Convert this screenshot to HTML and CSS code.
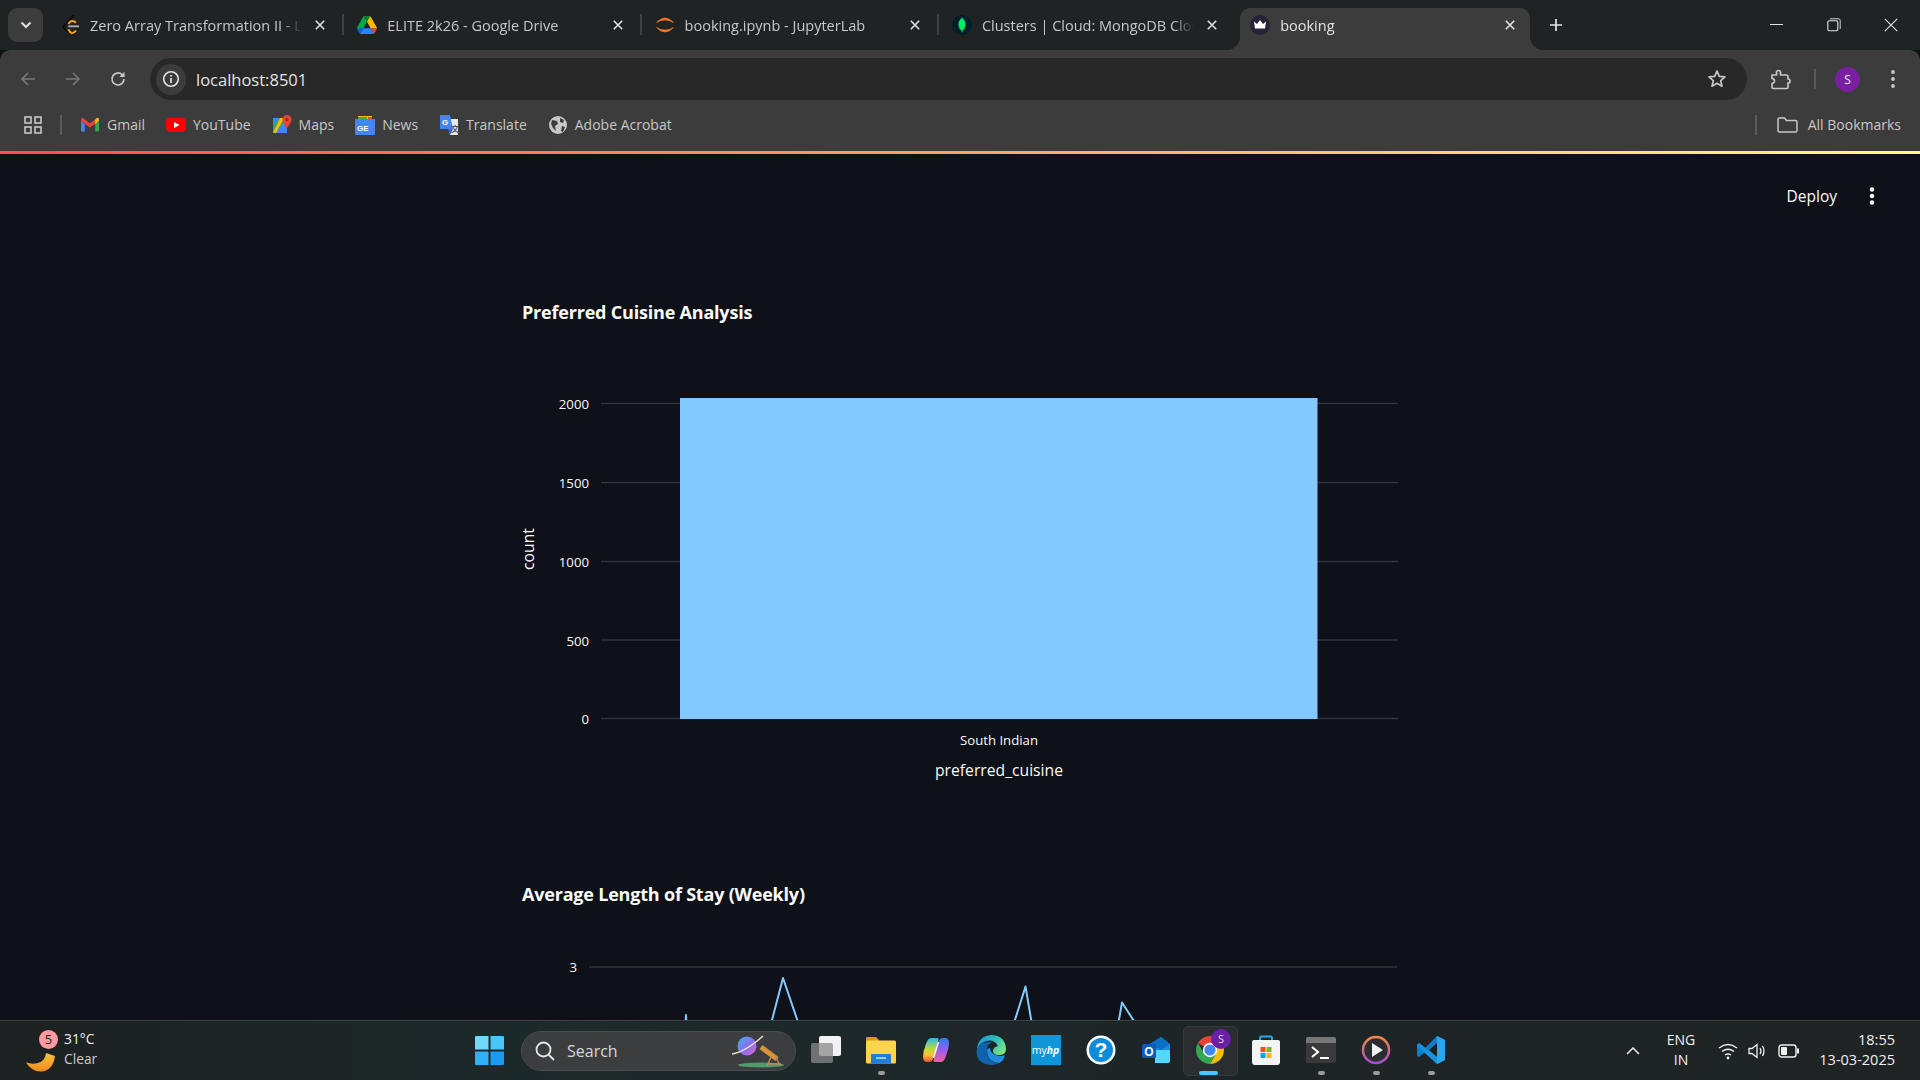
FILE: index.html
```html
<!DOCTYPE html>
<html>
<head>
<meta charset="utf-8">
<title>booking</title>
<link rel="stylesheet" href="styles.css">
</head>
<body>

<div class="tabstrip">
  <div class="tab-search">
    <svg width="12" height="8" viewBox="0 0 12 8"><path d="M1.500 1.500 6 6l4.500-4.500" fill="none" stroke="#e3e3e3" stroke-width="2"/></svg>
  </div>

  <div class="tab">
    <svg class="fav" viewBox="0 0 20 20"><path d="M14 0 3.800 11q-.8 1 0 2L8.300 18" fill="none" stroke="#0a0a0a" stroke-width="1.800"/><path d="M8.300 9Q11.500 3.500 16 7.700M8.300 14.300Q11.500 21 16 15.700" fill="none" stroke="#f7a21b" stroke-width="2"/><path d="M8.300 11.300H19" stroke="#b3b3b3" stroke-width="1.800"/></svg>
    <span class="tab-title">Zero Array Transformation II - Le</span>
    <svg class="tab-x" viewBox="0 0 10 10"><path d="M.8.8l8.400 8.400M9.200.8.800 9.200" stroke="#e3e3e3" stroke-width="1.600"/></svg>
  </div>
  <div class="tab">
    <svg class="fav" viewBox="0 0 87.300 78"><path d="m6.600 66.850 3.850 6.650c.8 1.400 1.950 2.500 3.300 3.300l13.750-23.800h-27.500c0 1.550.4 3.100 1.200 4.500z" fill="#0066da"/><path d="m43.650 25-13.750-23.800c-1.350.8-2.500 1.900-3.300 3.300l-25.400 44a9.060 9.060 0 0 0 -1.200 4.500h27.500z" fill="#00ac47"/><path d="m73.550 76.800c1.350-.8 2.500-1.900 3.300-3.300l1.600-2.750 7.650-13.250c.8-1.400 1.200-2.950 1.200-4.500h-27.502l5.852 11.500z" fill="#ea4335"/><path d="m43.650 25 13.750-23.800c-1.350-.8-2.900-1.200-4.500-1.200h-18.500c-1.600 0-3.150.45-4.500 1.200z" fill="#00832d"/><path d="m59.800 53h-32.300l-13.750 23.800c1.350.8 2.900 1.200 4.500 1.200h50.800c1.600 0 3.150-.45 4.500-1.200z" fill="#2684fc"/><path d="m73.400 26.500-12.700-22c-.8-1.400-1.950-2.500-3.300-3.300l-13.750 23.800 16.150 28h27.450c0-1.550-.4-3.100-1.200-4.500z" fill="#ffba00"/></svg>
    <span class="tab-title">ELITE 2k26 - Google Drive</span>
    <svg class="tab-x" viewBox="0 0 10 10"><path d="M.8.8l8.400 8.400M9.200.8.800 9.200" stroke="#e3e3e3" stroke-width="1.600"/></svg>
  </div>
  <div class="tab">
    <svg class="fav" viewBox="0 0 20 20"><path d="M1.500 7.500Q10-1.500 18.500 7.500Q10 2.500 1.500 7.500zM1.500 12.500Q10 21.500 18.500 12.500Q10 17.500 1.500 12.500z" fill="#f37726" stroke="#f37726" stroke-width=".6"/></svg>
    <span class="tab-title">booking.ipynb - JupyterLab</span>
    <svg class="tab-x" viewBox="0 0 10 10"><path d="M.8.8l8.400 8.400M9.200.8.800 9.200" stroke="#e3e3e3" stroke-width="1.600"/></svg>
  </div>
  <div class="tab tab-last">
    <svg class="fav" viewBox="0 0 20 20"><circle cx="10" cy="10" r="10" fill="#001e2b"/><path d="M10 2.500q4 4 3.500 8-.5 3.500-3 5l-.2 2h-.6l-.2-2q-2.500-1.500-3-5-.5-4 3.500-8z" fill="#00ed64"/></svg>
    <span class="tab-title">Clusters | Cloud: MongoDB Clou</span>
    <svg class="tab-x" viewBox="0 0 10 10"><path d="M.8.8l8.400 8.400M9.200.8.800 9.200" stroke="#e3e3e3" stroke-width="1.600"/></svg>
  </div>
  <div class="tab tab-active">
    <svg class="fav" viewBox="0 0 20 20"><circle cx="10" cy="10" r="10" fill="#23233a"/><path d="M4 6.500l3 2.500 3-4 3 4 3-2.500-1 7h-10z" fill="#fff"/></svg>
    <span class="tab-title">booking</span>
    <svg class="tab-x" viewBox="0 0 10 10"><path d="M.8.8l8.400 8.400M9.200.8.800 9.200" stroke="#e3e3e3" stroke-width="1.600"/></svg>
  </div>

  <svg class="new-tab" width="14" height="14" viewBox="0 0 14 14"><path d="M7 1v12M1 7h12" stroke="#e3e3e3" stroke-width="1.700"/></svg>

  <div class="win-controls">
    <svg width="14" height="14" viewBox="0 0 14 14"><path d="M0 6.500h13" stroke="#e3e3e3" stroke-width="1"/></svg>
    <svg width="14" height="14" viewBox="0 0 14 14"><rect x=".8" y="2.800" width="10" height="10" rx="1.500" fill="none" stroke="#e3e3e3" stroke-width="1.100"/><path d="M3 .8h8.500q1.700 0 1.700 1.700V11" fill="none" stroke="#e3e3e3" stroke-width=".9"/></svg>
    <svg width="14" height="14" viewBox="0 0 14 14"><path d="M.8.8l12.400 12.400M13.200.8.800 13.200" stroke="#e3e3e3" stroke-width="1.100"/></svg>
  </div>
</div>

<div class="toolbar">
  <div class="nav-btn"><svg width="16" height="16" viewBox="0 0 16 16"><path d="M15 8H2M8 2 2 8l6 6" fill="none" stroke="#747775" stroke-width="1.700"/></svg></div>
  <div class="nav-btn"><svg width="16" height="16" viewBox="0 0 16 16"><path d="M1 8h13M8 2l6 6-6 6" fill="none" stroke="#747775" stroke-width="1.700"/></svg></div>
  <div class="nav-btn"><svg width="18" height="18" viewBox="0 0 18 18"><path d="M15 9a6 6 0 1 1-1.800-4.300L15 6.500" fill="none" stroke="#c7c7c7" stroke-width="1.700"/><path d="M15.500 1.800v5.200h-5.200z" fill="#c7c7c7"/></svg></div>
  <div class="omnibox">
    <div class="site-info"><svg width="18" height="18" viewBox="0 0 18 18"><circle cx="9" cy="9" r="7.300" fill="none" stroke="#e3e3e3" stroke-width="1.600"/><path d="M9 8v5M9 5v1.600" stroke="#e3e3e3" stroke-width="1.700"/></svg></div>
    <span class="url">localhost:8501</span>
    <svg class="star" width="20" height="20" viewBox="0 0 20 20"><path d="M10 2l2.300 5.300 5.700.5-4.300 3.800 1.300 5.600L10 14.200 5 17.200l1.300-5.600L2 7.800l5.700-.5z" fill="none" stroke="#c7c7c7" stroke-width="1.700" stroke-linejoin="round"/></svg>
  </div>
  <svg class="puzzle" width="22" height="22" viewBox="0 0 22 22"><path d="M2 7h4.500V4.500a2 2 0 0 1 4 0V7H16q2 0 2 2v2a2 2 0 0 1 0 4v4q0 1.500-1.500 1.500H3.500Q2 20.500 2 19v-3.500a2.500 2.500 0 0 0 0-5z" fill="none" stroke="#c7c7c7" stroke-width="1.700" stroke-linejoin="round"/></svg>
  <span class="tool-sep"></span>
  <span class="avatar">S</span>
  <svg class="tool-menu" width="6" height="20" viewBox="0 0 6 20"><circle cx="3" cy="3" r="1.900" fill="#c7c7c7"/><circle cx="3" cy="10" r="1.900" fill="#c7c7c7"/><circle cx="3" cy="17" r="1.900" fill="#c7c7c7"/></svg>
</div>

<div class="bookmarks">
  <svg class="apps" width="18" height="18" viewBox="0 0 18 18"><g fill="none" stroke="#c7c7c7" stroke-width="1.600"><rect x="1" y="1" width="6" height="6"/><rect x="11" y="1" width="6" height="6"/><rect x="1" y="11" width="6" height="6"/><rect x="11" y="11" width="6" height="6"/></g></svg>
  <span class="bm-sep"></span>
  <div class="bm">
    <svg class="bm-icon" viewBox="0 0 20 20"><path d="M1 5.500v10q0 1 1 1h2.800V9.200z" fill="#4285f4"/><path d="M19 5.500v10q0 1-1 1h-2.800V9.200z" fill="#34a853"/><path d="M1 4.500Q1 2.500 3 3l7 5.500L17 3q2-.5 2 1.500v1l-4 3.500L10 12.500 5 9 1 5.500z" fill="#ea4335"/><path d="M15.200 4.500 17 3q2-.5 2 1.500v1L15.200 9.200z" fill="#fbbc04"/></svg>
    Gmail
  </div>
  <div class="bm">
    <svg class="bm-icon" viewBox="0 0 20 20"><rect y="3" width="20" height="14" rx="4" fill="#f00"/><path d="M8 7l5.500 3L8 13z" fill="#fff"/></svg>
    YouTube
  </div>
  <div class="bm">
    <svg class="bm-icon" viewBox="0 0 20 20"><path d="M1 3h11v15H1z" fill="#34a853"/><path d="M1 18 12 8l3 3v7z" fill="#4285f4"/><path d="M1 18 8 3h4L4 18z" fill="#fbbc04"/><path d="M1 3h7L1 10z" fill="#4285f4"/><path d="M15 0a4.500 4.500 0 0 1 4.500 4.500Q19.500 8 15 13q-4.500-5-4.500-8.500A4.500 4.500 0 0 1 15 0z" fill="#ea4335"/><circle cx="15" cy="4.500" r="1.600" fill="#8e2a20"/></svg>
    Maps
  </div>
  <div class="bm">
    <svg class="bm-icon" viewBox="0 0 20 20"><path d="M3 1h14v5H3z" fill="#fbbc04"/><path d="M3 2h9v4H3z" fill="#34a853"/><path d="M13 2h4v4h-4z" fill="#ea4335"/><rect x="0" y="4" width="20" height="16" rx="1" fill="#4285f4"/><text x="2" y="16" class="bm-glyph">GE</text></svg>
    News
  </div>
  <div class="bm">
    <svg class="bm-icon" viewBox="0 0 20 20"><path d="M9 4h10v16H11z" fill="#e8eaed"/><path d="M1 0h10l3 14H1z" fill="#4285f4"/><path d="M9 14h5l-3 6z" fill="#3367d6"/><text x="3" y="10" class="bm-glyph">G</text><text x="12" y="17" class="bm-glyph bm-glyph-dark">文</text></svg>
    Translate
  </div>
  <div class="bm">
    <svg class="bm-icon" viewBox="0 0 20 20"><circle cx="10" cy="10" r="9" fill="#c7c7c7"/><path d="M4 5l5 1 1 3-3 2 1 5-3-3-2-4zM12 3l4 2-1 3-3-1zM14 11l3 1-2 5-2-1z" fill="#3c3c3c"/></svg>
    Adobe Acrobat
  </div>
  <span class="bm-spacer"></span>
  <span class="bm-sep"></span>
  <div class="bm bm-all">
    <svg class="bm-folder" width="21" height="16" viewBox="0 0 21 16"><path d="M1 2.500Q1 1 2.500 1h5l2 2.500h9Q20 3.500 20 5v8.500Q20 15 18.500 15h-16Q1 15 1 13.500z" fill="none" stroke="#c7c7c7" stroke-width="1.500"/></svg>
    All Bookmarks
  </div>
</div>

<div class="decoration"></div>

<main class="page">
  <header class="app-header">
    <span class="deploy">Deploy</span>
    <svg class="app-menu" width="6" height="18" viewBox="0 0 6 18"><circle cx="3" cy="2.500" r="2.200" fill="#fafafa"/><circle cx="3" cy="9" r="2.200" fill="#fafafa"/><circle cx="3" cy="15.500" r="2.200" fill="#fafafa"/></svg>
  </header>

  <div class="block">
    <h3 class="chart-title">Preferred Cuisine Analysis</h3>
    <svg class="chart" width="876" height="450" viewBox="0 0 876 450">
      <g class="grid">
        <line x1="79" x2="876" y1="63.500" y2="63.500"/>
        <line x1="79" x2="876" y1="142.500" y2="142.500"/>
        <line x1="79" x2="876" y1="221.500" y2="221.500"/>
        <line x1="79" x2="876" y1="300" y2="300"/>
        <line x1="79" x2="876" y1="378.500" y2="378.500"/>
      </g>
      <rect x="158" y="58" width="637.500" height="321" fill="#83c9ff"/>
      <g class="tick" text-anchor="end">
        <text x="67" y="69">2000</text>
        <text x="67" y="148">1500</text>
        <text x="67" y="227">1000</text>
        <text x="67" y="306">500</text>
        <text x="67" y="384">0</text>
      </g>
      <text class="tick" x="477" y="405" text-anchor="middle">South Indian</text>
      <text class="axis" x="477" y="436" text-anchor="middle">preferred_cuisine</text>
      <text class="axis" transform="translate(12 209) rotate(-90)" text-anchor="middle">count</text>
    </svg>

    <h3 class="chart-title chart-title-next">Average Length of Stay (Weekly)</h3>
    <svg class="chart chart-line" width="876" height="160" viewBox="0 0 876 160">
      <line class="gridline" x1="67" x2="875" y1="41" y2="41"/>
      <text class="tick" x="55" y="46" text-anchor="end">3</text>
      <path d="M161 140 164 89 167 140M238 140 261 52 291 140M478.500 140 503.500 60.500 517 140M589 140 600 76.500 641 140" fill="none" stroke="#83c9ff" stroke-width="2" stroke-linejoin="round"/>
    </svg>
  </div>
</main>

<footer class="taskbar">
  <div class="weather">
    <svg class="weather-moon" width="30" height="20" viewBox="0 0 30 20"><defs><linearGradient id="moonFill" x1="0" y1="0" x2="0" y2="1"><stop offset="0" stop-color="#f9c23c"/><stop offset="1" stop-color="#ee8a1d"/></linearGradient></defs><path d="M0 9.500Q6 19 15 18.500 27 18 29 3L20 0Q19 8 12 10 6 11.500 0 9.500z" fill="url(#moonFill)"/></svg>
    <span class="weather-badge">5</span>
    <div class="weather-text"><span class="weather-temp">31°C</span><span>Clear</span></div>
  </div>

  <div class="start">
    <svg width="29" height="29" viewBox="0 0 29 29"><path d="M0 1q0-1 1-1h12.500v13.500H0z" fill="#6fd8fb"/><path d="M15.500 0H28q1 0 1 1v12.500H15.500z" fill="#48c6f7"/><path d="M0 15.500h13.500V29H1q-1 0-1-1z" fill="#2fb1f5"/><path d="M15.500 15.500H29V28q0 1-1 1H15.500z" fill="#1a9bf0"/></svg>
  </div>

  <div class="search">
    <svg width="22" height="22" viewBox="0 0 22 22"><circle cx="9.500" cy="9.500" r="7" fill="none" stroke="#e6e6e6" stroke-width="1.800"/><path d="M14.500 14.500 20 20" stroke="#e6e6e6" stroke-width="1.800"/></svg>
    <span class="search-label">Search</span>
    <svg class="search-art" width="56" height="36" viewBox="0 0 56 36"><defs><linearGradient id="planetFill" x1="0" y1="0" x2="1" y2="1"><stop offset="0" stop-color="#3fb4e8"/><stop offset=".55" stop-color="#8a6cf0"/><stop offset="1" stop-color="#e06ac8"/></linearGradient></defs><ellipse cx="30" cy="32" rx="23" ry="2.500" fill="#4e9a6a"/><circle cx="16" cy="13" r="9.500" fill="url(#planetFill)"/><path d="M1 21Q14 19 32 3" fill="none" stroke="#eadfcf" stroke-width="1.500"/><path d="M30 14l16 12" stroke="#d9913d" stroke-width="5"/><path d="M40 24l-4 9M44 22l5 11M36 31h14" fill="none" stroke="#b98a5e" stroke-width="1.500"/></svg>
  </div>

  <div class="task-icons">
    <div class="task">
      <svg width="30" height="30" viewBox="0 0 30 30"><rect x="8" y="1" width="22" height="20" rx="2" fill="#f2f2f2"/><rect y="8" width="22" height="20" rx="2" fill="#8a8a8a" fill-opacity=".75"/></svg>
    </div>
    <div class="task task-open">
      <svg width="30" height="30" viewBox="0 0 30 30"><path d="M0 3q0-1 1-1h9l3 3v3H0z" fill="#d99a14"/><path d="M0 7q0-1.500 1.500-1.500H28.500Q30 5.500 30 7v20q0 1.500-1.500 1.500h-27Q0 28.500 0 27z" fill="#ffd34e"/><path d="M5 20q0-1 1-1h18q1 0 1 1v8.500H5z" fill="#1e7fd6"/><path d="M10 23h10" stroke="#bfe3ff" stroke-width="1.500"/></svg>
    </div>
    <div class="task">
      <svg width="28" height="26" viewBox="0 0 28 26"><defs><linearGradient id="copilotLeft" x1=".5" y1="0" x2=".5" y2="1"><stop offset="0" stop-color="#2fb8f0"/><stop offset=".45" stop-color="#b6dc3c"/><stop offset=".7" stop-color="#f7c52f"/><stop offset="1" stop-color="#f0503a"/></linearGradient><linearGradient id="copilotRight" x1=".5" y1="0" x2=".5" y2="1"><stop offset="0" stop-color="#2a7ff0"/><stop offset=".5" stop-color="#9a5cf0"/><stop offset="1" stop-color="#f0609c"/></linearGradient></defs><path d="M9 1h6q2 0 1.500 2L11 22q-1 3-4 3H5q-4 0-4-5 0-6 3-13 2-6 5-6z" fill="url(#copilotLeft)"/><path d="M19 25h-6q-2 0-1.500-2L17 4q1-3 4-3h2q4 0 4 5 0 6-3 13-2 6-5 6z" fill="url(#copilotRight)"/><path d="M16.500 5 11.500 21" stroke="#f7f7f7" stroke-width="1.500"/></svg>
    </div>
    <div class="task">
      <svg width="30" height="30" viewBox="0 0 30 30"><defs><linearGradient id="edgeTop" x1="0" y1="0" x2="1" y2=".6"><stop offset="0" stop-color="#1a8fd8"/><stop offset=".6" stop-color="#2fc0b8"/><stop offset="1" stop-color="#7be37f"/></linearGradient></defs><path d="M1 13Q3 1 15 0q14 0 15 14 0 6-7 6-6 0-6-4 0-4 5-5-4-7-12-5-7 2-9 10z" fill="url(#edgeTop)"/><path d="M1 13q-2 11 6 15 9 4 16 0-5 0-9-4-4-4-3-10 0-4 5-7Q5 6 1 13z" fill="#0e63ad"/><path d="M11 15q0 6 4 10 4 3 8 3 5-2 6-8-4 2-9 0-6-2-6-7-2 0-3 2z" fill="#1f8fdc"/></svg>
    </div>
    <div class="task">
      <span class="myhp">my<i>hp</i></span>
    </div>
    <div class="task">
      <svg width="30" height="30" viewBox="0 0 30 30"><circle cx="15" cy="15" r="14.500" fill="#fff"/><circle cx="15" cy="15" r="12" fill="#0f8bdc"/><text x="15" y="22" text-anchor="middle" class="help-glyph">?</text></svg>
    </div>
    <div class="task">
      <svg width="30" height="30" viewBox="0 0 30 30"><path d="M9 9 20 2l9 7v9H9z" fill="#1490df"/><path d="M20 2l9 7-9 6-11-6z" fill="#0a6fc4"/><path d="M14 15h15v11q0 2-2 2H14z" fill="#50d9ff"/><rect x="1" y="9" width="14" height="14" rx="1.500" fill="#0a5cb5"/><text x="8" y="20.500" text-anchor="middle" class="outlook-glyph">O</text></svg>
    </div>
    <div class="task task-active">
      <svg class="chrome-icon" width="32" height="32" viewBox="0 0 32 32"><path d="M16 16 3.880 9A14 14 0 0 1 28.120 9L16 9z" fill="#ea4335"/><path d="M16 9H28.120A14 14 0 0 1 16 30L22.060 19.500z" fill="#fbbc04"/><path d="M16 30A14 14 0 0 1 3.880 9L9.940 19.500 22.060 19.500z" fill="#34a853"/><circle cx="16" cy="16" r="7.200" fill="#fff"/><circle cx="16" cy="16" r="5.600" fill="#4285f4"/></svg>
      <span class="chrome-badge">S</span>
    </div>
    <div class="task">
      <svg width="30" height="30" viewBox="0 0 30 30"><path d="M9 6V3q0-1.500 1.500-1.500h9Q21 1.500 21 3v3" fill="none" stroke="#2aa6e8" stroke-width="2"/><path d="M1 7q0-2 2-2h24q2 0 2 2v20q0 3-3 3H4q-3 0-3-3z" fill="#f4f4f4"/><rect x="9.500" y="12" width="5" height="5" fill="#f25022"/><rect x="15.500" y="12" width="5" height="5" fill="#7fba00"/><rect x="9.500" y="18" width="5" height="5" fill="#00a4ef"/><rect x="15.500" y="18" width="5" height="5" fill="#ffb900"/></svg>
    </div>
    <div class="task task-open">
      <svg width="30" height="30" viewBox="0 0 30 30"><rect y="2" width="30" height="26" rx="2" fill="#3a3a3a"/><path d="M0 4q0-2 2-2h26q2 0 2 2v4H0z" fill="#777"/><path d="M6 12l6 5-6 5" fill="none" stroke="#fff" stroke-width="2"/><path d="M14 23h9" stroke="#fff" stroke-width="2"/></svg>
    </div>
    <div class="task task-open">
      <svg width="30" height="30" viewBox="0 0 30 30"><defs><linearGradient id="mediaRing" x1="0" y1="0" x2="0" y2="1"><stop offset="0" stop-color="#f08a4b"/><stop offset="1" stop-color="#a44bd0"/></linearGradient></defs><circle cx="15" cy="15" r="13" fill="#2b2b30" stroke="url(#mediaRing)" stroke-width="2.500"/><path d="M11 8l11 7-11 7z" fill="#f0f0f0"/></svg>
    </div>
    <div class="task task-open">
      <svg width="30" height="30" viewBox="0 0 30 30"><path d="M21 1 29 5v20l-8 4L9 17 3 22l-2-1.500V9.500L3 8l6 5z" fill="#0f7ec9"/><path d="M21 1l8 4v20l-8 4z" fill="#2aa5ec"/><path d="M21 8v14l-8-7z" fill="#1b1f21"/><path d="M3 8l18 14v7L1 11z" fill="#1793de"/></svg>
    </div>
  </div>

  <div class="tray">
    <svg class="tray-chevron" width="14" height="8" viewBox="0 0 14 8"><path d="M1 7l6-6 6 6" fill="none" stroke="#f0f0f0" stroke-width="1.500"/></svg>
    <div class="tray-lang"><span>ENG</span><span>IN</span></div>
    <svg class="tray-wifi" width="20" height="18" viewBox="0 0 20 18"><path d="M1 6q9-7 18 0M4 9.500q6-4.500 12 0M7 13q3-2 6 0" fill="none" stroke="#f0f0f0" stroke-width="1.500"/><circle cx="10" cy="16" r="1.400" fill="#f0f0f0"/></svg>
    <svg class="tray-sound" width="20" height="18" viewBox="0 0 20 18"><path d="M1 6.500h3L9 2.500v13l-5-4H1z" fill="none" stroke="#f0f0f0" stroke-width="1.300"/><path d="M12 6q2 3 0 6M14.500 4q3 5 0 10" fill="none" stroke="#f0f0f0" stroke-width="1.300"/></svg>
    <svg class="tray-battery" width="22" height="14" viewBox="0 0 22 14"><rect x="1" y="1" width="17" height="12" rx="2.500" fill="none" stroke="#f0f0f0" stroke-width="1.400"/><rect x="3" y="3" width="6" height="8" rx="1" fill="#f0f0f0"/><path d="M20 4.500v5" stroke="#f0f0f0" stroke-width="2"/></svg>
    <div class="clock"><span>18:55</span><span>13-03-2025</span></div>
  </div>
</footer>

</body>
</html>
```

FILE: styles.css
```css
html, body {
    margin: 0;
    height: 100%;
}

body {
    display: flex;
    flex-direction: column;
    height: 1080px;
    overflow: hidden;
    background: #0e1117;
    font-family: "Open Sans", "Noto Sans", sans-serif;
    font-stretch: 88%;
}

svg {
    flex: none;
    display: block;
}

/* tab strip */
.tabstrip {
    display: flex;
    align-items: flex-end;
    height: 50px;
    background: #202324;
    position: relative;
}

.tab-search {
    display: flex;
    align-items: center;
    justify-content: center;
    width: 35px;
    height: 34px;
    margin: 0 4px 8px 8px;
    border-radius: 9px;
    background: #3c3c3c;
}

.tab {
    display: flex;
    align-items: center;
    flex: none;
    width: 297.300px;
    height: 42px;
    box-sizing: border-box;
    padding: 0 14px 8px 13px;
    color: #c7c7c7;
    font-size: 14.500px;
    position: relative;
}

.tab::after {
    content: "";
    position: absolute;
    right: 0;
    top: 6px;
    width: 2px;
    height: 21px;
    background: #3e4244;
}

.tab-last::after {
    display: none;
}

.fav {
    width: 20px;
    height: 20px;
    flex: none;
}

.tab-title {
    flex: 1;
    min-width: 0;
    margin-left: 10px;
    overflow: hidden;
    white-space: nowrap;
    -webkit-mask-image: linear-gradient(90deg, #000 90%, transparent 100%);
}

.tab-x {
    width: 10px;
    height: 10px;
    margin: 0 5px 0 13px;
}

.tab-active {
    width: 290px;
    margin-left: 4px;
    padding-left: 10px;
    padding-right: 10px;
    background: #3c3c3c;
    border-radius: 10px 10px 0 0;
    color: #e3e3e3;
}

.tab-active::before,
.tab-active::after {
    content: "";
    position: absolute;
    bottom: 0;
    top: auto;
    width: 14px;
    height: 14px;
    background: radial-gradient(circle at 0 0, transparent 14px, #3c3c3c 14.500px);
}

.tab-active::before {
    left: -14px;
}

.tab-active::after {
    right: -14px;
    background: radial-gradient(circle at 100% 0, transparent 14px, #3c3c3c 14.500px);
}

.new-tab {
    margin: 0 0 18px 19px;
}

.win-controls {
    display: flex;
    margin: 0 22px 18px auto;
    gap: 43px;
}

/* toolbar */
.toolbar {
    display: flex;
    align-items: center;
    height: 50px;
    padding: 8px 0 0 5px;
    box-sizing: border-box;
    background: #3c3c3c;
    border-radius: 10px 10px 0 0;
}

.nav-btn {
    display: flex;
    align-items: center;
    justify-content: center;
    width: 45px;
    height: 42px;
}

.omnibox {
    display: flex;
    align-items: center;
    flex: none;
    width: 1597px;
    height: 42px;
    margin-left: 10px;
    box-sizing: border-box;
    padding: 0 20px 0 6px;
    background: #282828;
    border-radius: 21px;
}

.site-info {
    display: flex;
    align-items: center;
    justify-content: center;
    width: 30px;
    height: 31px;
    border-radius: 50%;
    background: #3c3c3c;
}

.url {
    margin-left: 10px;
    color: #e3e3e3;
    font-size: 16.500px;
}

.star {
    margin-left: auto;
}

.puzzle {
    margin-left: 23px;
}

.tool-sep {
    width: 2px;
    height: 20px;
    margin-left: 22px;
    background: #5a5a5a;
}

.avatar {
    display: flex;
    align-items: center;
    justify-content: center;
    width: 25px;
    height: 25px;
    margin-left: 19px;
    border-radius: 50%;
    background: #7b1fa2;
    color: #eee;
    font-size: 12px;
}

.tool-menu {
    margin-left: 30px;
}

/* bookmarks */
.bookmarks {
    display: flex;
    align-items: center;
    height: 51px;
    padding: 0 19px 2px 24px;
    box-sizing: border-box;
    background: #3c3c3c;
    color: #c7c7c7;
    font-size: 14px;
}

.bm-sep {
    width: 2px;
    height: 20px;
    margin: 0 18px 0 18px;
    background: #5a5a5a;
}

.bm {
    display: flex;
    align-items: center;
    margin-right: 21px;
    white-space: nowrap;
}

.bm-icon {
    width: 20px;
    height: 20px;
    margin-right: 7px;
}

.bm-glyph {
    font: 700 8px "Liberation Sans", sans-serif;
    fill: #fff;
}

.bm-glyph-dark {
    fill: #555;
    font-family: "Noto Sans CJK SC", sans-serif;
}

.bm-spacer {
    flex: 1;
}

.bm-all {
    margin: 0 0 0 2px;
}

.bm-folder {
    margin-right: 10px;
}

.decoration {
    flex: none;
    height: 3px;
    background: linear-gradient(90deg, #ff4b4b, #fffd80);
}

/* streamlit page */
.page {
    flex: 1;
    min-height: 0;
    overflow: hidden;
    background: #0e1117;
    color: #fafafa;
    font-family: "Open Sans", "Noto Sans", sans-serif;
}

.app-header {
    display: flex;
    align-items: center;
    justify-content: flex-end;
    height: 22px;
    padding: 31px 45px 0 0;
}

.deploy {
    font-size: 15.500px;
}

.app-menu {
    margin-left: 32px;
}

.block {
    width: 876px;
    margin: 0 auto;
}

.chart-title {
    margin: 91px 0 0 0;
    font-size: 18px;
    letter-spacing: -0.2px;
    line-height: 28px;
    font-weight: 700;
}

.chart-title-next {
    margin-top: 90px;
}

.chart {
    margin-top: 14px;
}

.chart-line {
    margin-top: 18px;
}

.grid line,
.gridline {
    stroke: #31333f;
    stroke-width: 1.500;
}

.tick text,
text.tick {
    fill: #fafafa;
    font-size: 13.200px;
}

.axis {
    fill: #fafafa;
    font-size: 15.700px;
}

/* taskbar */
.taskbar {
    display: flex;
    align-items: center;
    flex: none;
    height: 60px;
    box-sizing: border-box;
    border-top: 1px solid #3b3f41;
    background: linear-gradient(90deg, #1d2122, #1c2a2c 30%, #1d2527 60%, #1f2324);
    color: #f0f0f0;
    position: relative;
}

.weather {
    display: flex;
    align-items: center;
    flex: none;
    width: 461px;
    height: 100%;
    padding-left: 26px;
    box-sizing: border-box;
    position: relative;
}

.weather-moon {
    margin-top: 24px;
}

.weather-badge {
    position: absolute;
    left: 39px;
    top: 9px;
    width: 19px;
    height: 19px;
    border-radius: 50%;
    background: #ff9aa2;
    color: #222;
    text-align: center;
    font-size: 13px;
    line-height: 19px;
}

.weather-text {
    display: flex;
    flex-direction: column;
    margin: -3px 0 0 8px;
    font-size: 13.800px;
    line-height: 20px;
    color: #c9cccc;
}

.weather-temp {
    color: #f0f0f0;
}

.start {
    display: flex;
    justify-content: center;
    width: 56px;
    flex: none;
}

.search {
    display: flex;
    align-items: center;
    flex: none;
    width: 275px;
    height: 40px;
    margin-left: 4px;
    padding: 0 8px 0 12px;
    box-sizing: border-box;
    border: 1px solid #4a4d4e;
    border-radius: 20px;
    background: #3b3d3e;
}

.search-label {
    margin-left: 11px;
    font-size: 16px;
    color: #d6d6d6;
}

.search-art {
    margin-left: auto;
}

.task-icons {
    display: flex;
    margin-left: 2px;
}

.task {
    display: flex;
    align-items: center;
    justify-content: center;
    width: 55px;
    height: 50px;
    padding-bottom: 1px;
    box-sizing: border-box;
    position: relative;
}

.task-open::after,
.task-active::after {
    content: "";
    position: absolute;
    bottom: 1px;
    left: 25px;
    width: 7px;
    height: 4px;
    border-radius: 2px;
    background: #9a9a9a;
}

.task-active {
    background: #2a2e30;
    border: 1px solid #34383a;
    border-radius: 5px;
}

.task-active::after {
    bottom: 0;
    left: 15px;
    width: 19px;
    background: #4cc2ff;
}

.chrome-icon {
    margin-right: 2px;
}

.chrome-badge {
    position: absolute;
    left: 27px;
    top: 2px;
    width: 20px;
    height: 20px;
    border-radius: 50%;
    background: #6a1fa8;
    color: #ddd;
    text-align: center;
    font-size: 11px;
    line-height: 20px;
}

.myhp {
    display: flex;
    align-items: center;
    justify-content: center;
    width: 30px;
    height: 30px;
    background: #0f96d8;
    color: #fff;
    font-size: 10.500px;
}

.myhp i {
    font-weight: 700;
}

.help-glyph {
    fill: #fff;
    font: 700 21px "Liberation Sans", sans-serif;
}

.outlook-glyph {
    fill: #fff;
    font: 700 12px "Liberation Sans", sans-serif;
}

.tray {
    display: flex;
    align-items: center;
    flex: 1;
    font-size: 14px;
}

.tray-chevron {
    margin-left: 168px;
}

.tray-lang {
    display: flex;
    flex-direction: column;
    align-items: center;
    width: 40px;
    margin: -1px 0 0 21px;
    line-height: 20px;
}

.tray-wifi {
    margin-left: 17px;
}

.tray-sound {
    margin-left: 10px;
}

.tray-battery {
    margin-left: 10px;
}

.clock {
    display: flex;
    flex-direction: column;
    align-items: flex-end;
    margin: -2px 25px 0 auto;
    font-size: 14.500px;
    line-height: 20px;
}
```
